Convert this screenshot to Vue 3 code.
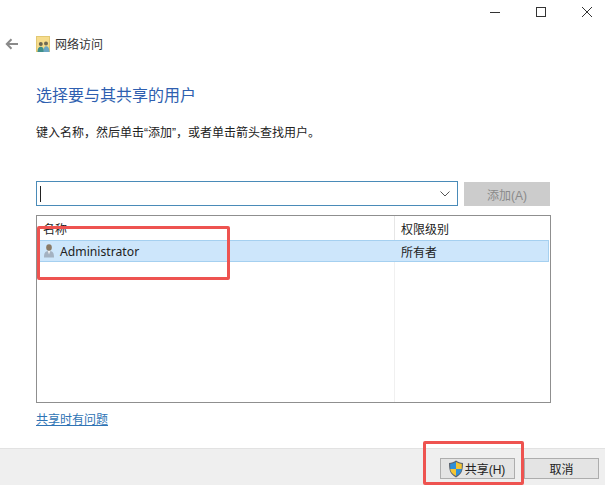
<script setup>
const title = '网络访问'
</script>

<template>
  <div class="window">
    <div class="titlebar">
      <svg class="cap" width="12" height="12" viewBox="0 0 12 12"><path d="M1 6.500h10" stroke="#333" stroke-width="1"/></svg>
      <svg class="cap" width="12" height="12" viewBox="0 0 12 12"><rect x="1.500" y="1.500" width="9" height="9" fill="none" stroke="#333"/></svg>
      <svg class="cap" width="12" height="12" viewBox="0 0 12 12"><path d="M1 1l10 10M11 1L1 11" stroke="#333" stroke-width="1"/></svg>
    </div>
    <div class="nav">
      <svg class="back" width="14" height="12" viewBox="0 0 14 12"><path d="M13 6H2M6.500 1.200L1.800 6l4.700 4.800" fill="none" stroke="#8a8a8a" stroke-width="2"/></svg>
      <svg class="navicon" width="14" height="16" viewBox="0 0 14 16">
        <rect width="14" height="16" fill="#f6dc8c"/>
        <rect x="0.500" y="0.500" width="13" height="15" fill="none" stroke="#e2c873"/>
        <circle cx="4.800" cy="8" r="2" fill="#6b6650"/>
        <circle cx="10" cy="7.500" r="2" fill="#6f6a54"/>
        <path d="M1.500 16c0-3.600 1.300-5.200 3.300-5.200S8 12.400 8 16z" fill="#3f8f8a"/>
        <path d="M7.500 16c0-3.800 .8-5.700 2.700-5.700s3.300 1.900 3.300 5.700z" fill="#6aa6c4"/>
      </svg>
      <span class="navtitle">{{ title }}</span>
    </div>
    <main class="content">
      <h1 class="heading">选择要与其共享的用户</h1>
      <p class="hint">键入名称，然后单击“添加”，或者单击箭头查找用户。</p>
      <div class="pick">
        <div class="combo">
          <span class="caret"></span>
          <svg width="10" height="6" viewBox="0 0 10 6"><path d="M0.500 0.500L5 5l4.500-4.500" fill="none" stroke="#555"/></svg>
        </div>
        <div class="addbtn">添加(A)</div>
      </div>
      <div class="table">
        <div class="row head">
          <div class="c1">名称</div>
          <div class="c2">权限级别</div>
        </div>
        <div class="row selected">
          <div class="c1 user">
            <svg width="10" height="14" viewBox="0 0 10 14">
              <ellipse cx="5" cy="3.500" rx="2.800" ry="3.300" fill="#8a7a66"/>
              <path d="M0 13.500c0-5 1.500-6.500 5-6.500s5 1.500 5 6.500z" fill="#a4b2c2"/>
              <path d="M3.700 7h2.600L5 10.500z" fill="#eeeeee"/>
            </svg>
            <span class="latin">Administrator</span>
          </div>
          <div class="c2">所有者</div>
        </div>
        <div class="rest"><div class="restline"></div></div>
      </div>
      <a class="link">共享时有问题</a>
      <div class="mark markleft"></div>
    </main>
    <footer class="footer">
      <div class="btn share">
        <svg width="16" height="18" viewBox="0 0 16 18">
          <path d="M8 .5C6 2 3.500 2.800 1 3c0 6 .5 11 7 14.500C14.500 14 15 9 15 3 12.500 2.800 10 2 8 .5z" fill="#5b6470"/>
          <path d="M8 2v7H2.300c0-1.500-.1-3-.1-5C4.300 3.700 6.300 3 8 2z" fill="#2f8fd8"/>
          <path d="M8 2c1.700 1 3.700 1.700 5.800 2 0 2 0 3.500-.1 5H8z" fill="#f4c534"/>
          <path d="M2.300 9H8v7C3.500 13.500 2.600 11.500 2.300 9z" fill="#f4c534"/>
          <path d="M13.700 9C13.400 11.500 12.500 13.500 8 16V9z" fill="#2f8fd8"/>
        </svg>
        <span>共享(H)</span>
      </div>
      <div class="btn cancel">取消</div>
      <div class="mark markright"></div>
    </footer>
  </div>
</template>

<style scoped>
.window {
  width: 605px;
  height: 485px;
  background: #fff;
  display: flex;
  flex-direction: column;
  overflow: hidden;
  color: #222;
  font: 12px "Liberation Sans", "Noto Sans CJK SC", sans-serif;
  position: relative;
}
.titlebar {
  height: 30px;
  flex: none;
  display: flex;
  justify-content: flex-end;
  align-items: flex-start;
  gap: 34px;
  padding: 6px 12px 0 0;
  box-sizing: border-box;
}
.cap { display: block; }
.nav {
  height: 27px;
  flex: none;
  display: flex;
  align-items: center;
  padding-left: 5px;
}
.navicon { margin-left: 17px; margin-right: 5px; }
.navtitle { font-size: 12px; color: #333; }
.content {
  flex: 1;
  padding: 0 54px 0 36px;
  position: relative;
  display: flex;
  flex-direction: column;
  min-height: 0;
}
.heading {
  margin: 29px 0 0;
  font-size: 16px;
  font-weight: 400;
  line-height: 20px;
  color: #2f5fb0;
}
.hint {
  margin: 18px 0 0;
  font-size: 12px;
  line-height: 18px;
  color: #222;
}
.pick {
  margin-top: 39px;
  display: flex;
  gap: 6px;
  align-items: flex-start;
}
.combo {
  width: 422px;
  height: 25px;
  box-sizing: border-box;
  border: 1px solid #4a8bb8;
  display: flex;
  align-items: center;
  justify-content: space-between;
  padding: 0 7px 0 3px;
  flex: none;
}
.caret {
  width: 1px;
  height: 16px;
  background: #222;
}
.addbtn {
  width: 86px;
  height: 24px;
  margin-top: 1px;
  background: #cccccc;
  color: #8a8a8a;
  flex: none;
  display: flex;
  align-items: center;
  justify-content: center;
}
.table {
  margin-top: 9px;
  width: 515px;
  height: 188px;
  box-sizing: border-box;
  border: 1px solid #8f8f8f;
  display: flex;
  flex-direction: column;
  padding-right: 1px;
}
.row {
  display: flex;
  flex: none;
}
.head {
  height: 24px;
  align-items: center;
}
.head .c1 { padding-left: 6px; }
.c1 { width: 357px; box-sizing: border-box; }
.c2 {
  flex: 1;
  padding-left: 6px;
  align-self: stretch;
  display: flex;
  align-items: center;
  border-left: 1px solid #e6e6e6;
}
.selected {
  height: 22px;
  background: #cde6fb;
  border-top: 1px solid #a5d0f0;
  border-bottom: 1px solid #a5d0f0;
  border-right: 1px solid #a5d0f0;
  box-sizing: border-box;
  align-items: center;
}
.selected .c2 { border-left-color: transparent; }
.user {
  display: flex;
  align-items: center;
  gap: 6px;
  padding-left: 7px;
}
.latin {
  font-family: "Noto Sans", "Liberation Sans", sans-serif;
  font-size: 12.200px;
  color: #222;
}
.rest { flex: 1; display: flex; }
.restline {
  margin-left: 357px;
  width: 1px;
  background: #f0f0f0;
}
.link {
  margin-top: 9px;
  align-self: flex-start;
  font-size: 12px;
  line-height: 16px;
  color: #2f74b5;
  text-decoration: underline;
}
.footer {
  height: 37px;
  flex: none;
  box-sizing: border-box;
  background: #efefef;
  border-top: 1px solid #e2e2e2;
  display: flex;
  justify-content: flex-end;
  gap: 9px;
  padding: 9px 6px 0 0;
  position: relative;
}
.btn {
  width: 75px;
  height: 21px;
  box-sizing: border-box;
  border: 1px solid #adadad;
  background: #e4e4e4;
  color: #222;
  display: flex;
  align-items: center;
  justify-content: center;
  gap: 1px;
}
.share { padding-right: 2px; }
.mark {
  position: absolute;
  box-sizing: border-box;
  border: 3px solid #ee5350;
  border-radius: 2px;
  pointer-events: none;
}
.markleft {
  left: 37px;
  top: 169px;
  width: 193px;
  height: 54px;
}
.markright {
  left: 423px;
  top: -8px;
  width: 101px;
  height: 44px;
}
</style>
